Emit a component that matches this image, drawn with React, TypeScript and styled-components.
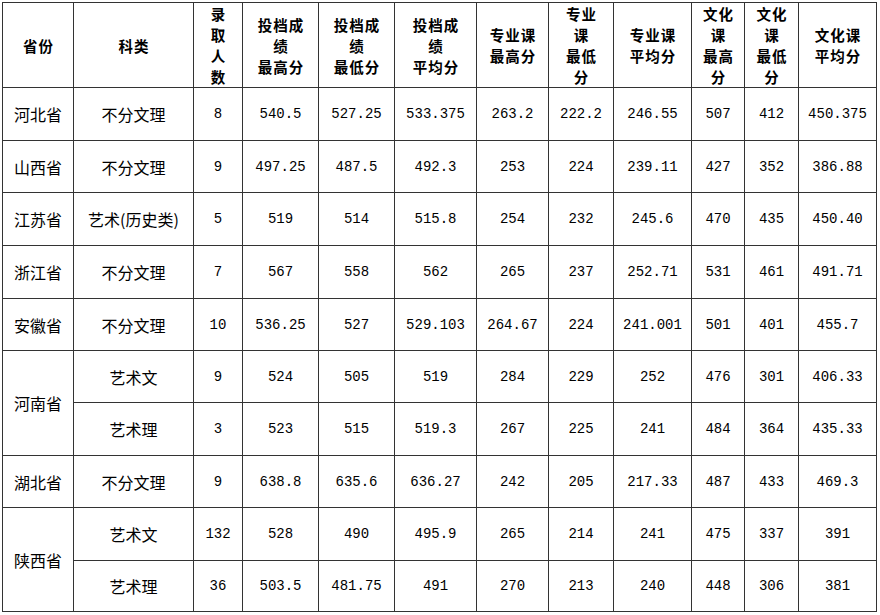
import React from "react";
import styled, { createGlobalStyle } from "styled-components";

type Row = {
  province?: string;
  span?: number;
  subject: string;
  values: string[];
  h: number;
};

const widths = [71, 120, 49, 76, 76, 82, 72, 65, 78, 53, 54, 78];

const headers: string[][] = [
  ["省份"],
  ["科类"],
  ["录", "取", "人", "数"],
  ["投档成", "绩", "最高分"],
  ["投档成", "绩", "最低分"],
  ["投档成", "绩", "平均分"],
  ["专业课", "最高分"],
  ["专业", "课", "最低", "分"],
  ["专业课", "平均分"],
  ["文化", "课", "最高", "分"],
  ["文化", "课", "最低", "分"],
  ["文化课", "平均分"],
];

const rows: Row[] = [
  { province: "河北省", subject: "不分文理", h: 53, values: ["8", "540.5", "527.25", "533.375", "263.2", "222.2", "246.55", "507", "412", "450.375"] },
  { province: "山西省", subject: "不分文理", h: 52, values: ["9", "497.25", "487.5", "492.3", "253", "224", "239.11", "427", "352", "386.88"] },
  { province: "江苏省", subject: "艺术(历史类)", h: 53, values: ["5", "519", "514", "515.8", "254", "232", "245.6", "470", "435", "450.40"] },
  { province: "浙江省", subject: "不分文理", h: 53, values: ["7", "567", "558", "562", "265", "237", "252.71", "531", "461", "491.71"] },
  { province: "安徽省", subject: "不分文理", h: 52, values: ["10", "536.25", "527", "529.103", "264.67", "224", "241.001", "501", "401", "455.7"] },
  { province: "河南省", span: 2, subject: "艺术文", h: 52, values: ["9", "524", "505", "519", "284", "229", "252", "476", "301", "406.33"] },
  { subject: "艺术理", h: 53, values: ["3", "523", "515", "519.3", "267", "225", "241", "484", "364", "435.33"] },
  { province: "湖北省", subject: "不分文理", h: 52, values: ["9", "638.8", "635.6", "636.27", "242", "205", "217.33", "487", "433", "469.3"] },
  { province: "陕西省", span: 2, subject: "艺术文", h: 53, values: ["132", "528", "490", "495.9", "265", "214", "241", "475", "337", "391"] },
  { subject: "艺术理", h: 51, values: ["36", "503.5", "481.75", "491", "270", "213", "240", "448", "306", "381"] },
];

const GlobalStyle = createGlobalStyle`
  html, body {
    margin: 0;
    padding: 0;
    background: #ffffff;
  }
  body {
    font-family: "Noto Sans CJK SC", "Liberation Sans", sans-serif;
    color: #000;
  }
`;

const Page = styled.div`
  padding: 2px 0 0 2px;
`;

const Table = styled.table`
  border-collapse: collapse;
  table-layout: fixed;
  width: 875px;
  border: 1px solid #333;
`;

const HeadCell = styled.th`
  border: 1px solid #333;
  height: 84px;
  padding: 0;
  text-align: center;
  vertical-align: middle;
  font-size: 14.5px;
  letter-spacing: 1px;
  font-weight: 700;
  line-height: 21px;
`;

const Line = styled.div`
  white-space: nowrap;
  margin-right: -1px;
`;

const Cell = styled.td<{ $num?: boolean }>`
  border: 1px solid #333;
  padding: 0;
  text-align: center;
  vertical-align: middle;
  white-space: nowrap;
  font-size: ${(p) => (p.$num ? "14px" : "16px")};
  font-family: ${(p) =>
    p.$num
      ? `"Liberation Mono", "DejaVu Sans Mono", monospace`
      : `"Noto Sans CJK SC", "Liberation Sans", sans-serif`};
  line-height: 20px;
`;

export default function App() {
  return (
    <Page>
      <GlobalStyle />
      <Table>
        <colgroup>
          {widths.map((w, i) => (
            <col key={i} style={{ width: w }} />
          ))}
        </colgroup>
        <thead>
          <tr>
            {headers.map((lines, i) => (
              <HeadCell key={i}>
                {lines.map((l, j) => (
                  <Line key={j}>{l}</Line>
                ))}
              </HeadCell>
            ))}
          </tr>
        </thead>
        <tbody>
          {rows.map((r, i) => (
            <tr key={i} style={{ height: r.h }}>
              {r.province && <Cell rowSpan={r.span ?? 1}>{r.province}</Cell>}
              <Cell>{r.subject}</Cell>
              {r.values.map((v, j) => (
                <Cell key={j} $num>
                  {v}
                </Cell>
              ))}
            </tr>
          ))}
        </tbody>
      </Table>
    </Page>
  );
}
